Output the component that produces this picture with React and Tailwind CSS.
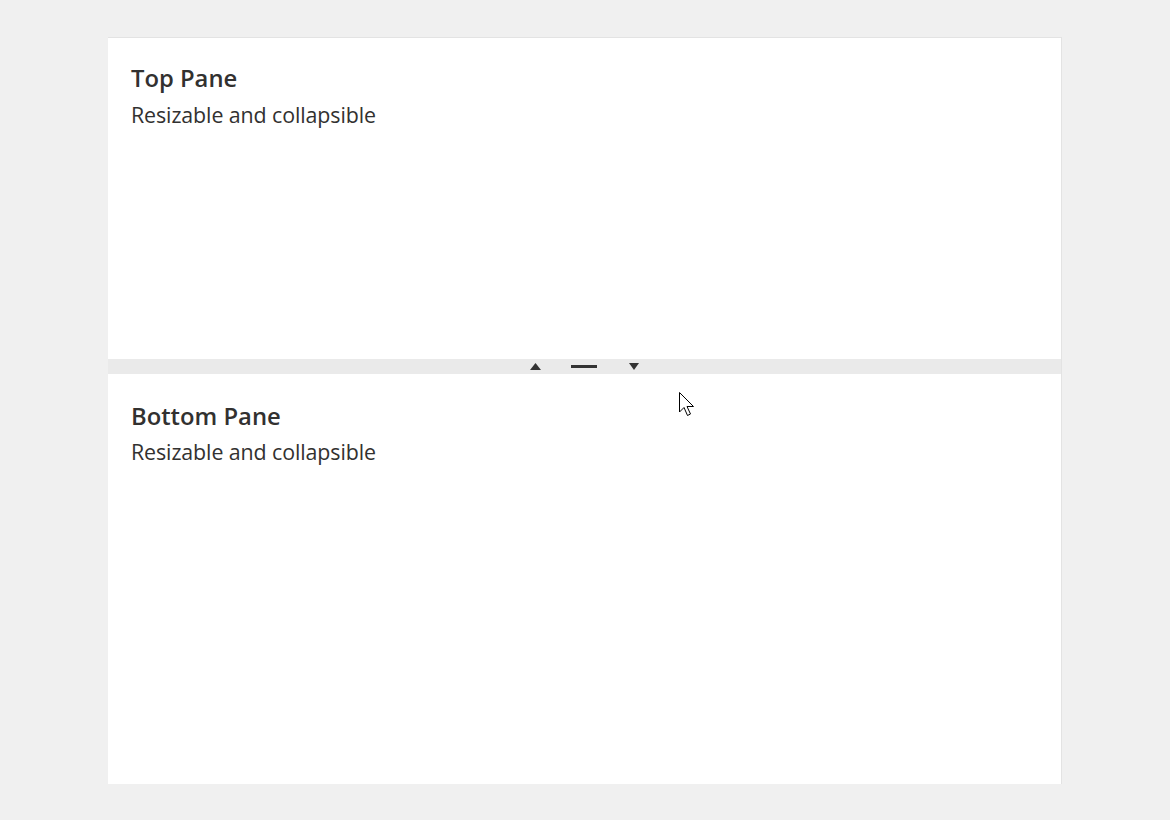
export default function App() {
  return (
    <div
      className="relative min-h-[820px] w-full bg-[#f0f0f0] pt-[37px] pl-[108px]"
      style={{ fontFamily: '"Open Sans", "Noto Sans", sans-serif' }}
    >
      <div className="flex h-[747px] w-[954px] flex-col border border-b-0 border-l-0 border-[#e3e3e3] bg-white text-[#323130]">
        {/* Top pane */}
        <div className="h-[321px] px-[23px] pt-[24px]">
          <h2 className="mb-[6px] text-[23.8px] font-semibold leading-[32px]">Top Pane</h2>
          <p className="text-[21.4px] leading-[30px] tracking-[-0.1px]">Resizable and collapsible</p>
        </div>

        {/* Splitter */}
        <div className="flex h-[15px] items-center justify-center bg-[#eaeaea]">
          <div className="flex items-center">
            <svg width="11" height="7" viewBox="0 0 11 7" className="mr-[30px]">
              <polygon points="5.5,0 11,7 0,7" fill="#333" />
            </svg>
            <div className="h-[3px] w-[26px] bg-[#333]" />
            <svg width="10" height="7" viewBox="0 0 10 7" className="ml-[32px]">
              <polygon points="0,0 10,0 5,7" fill="#333" />
            </svg>
          </div>
        </div>

        {/* Bottom pane */}
        <div className="flex-1 px-[23px] pt-[26px]">
          <h2 className="mb-[5px] text-[23.8px] font-semibold leading-[32px]">Bottom Pane</h2>
          <p className="text-[21.4px] leading-[30px] tracking-[-0.1px]">Resizable and collapsible</p>
        </div>
      </div>

      {/* mouse cursor */}
      <svg
        className="absolute left-[679px] top-[392px]"
        width="19"
        height="27"
        viewBox="0 0 19 27"
      >
        <path
          d="M0.5 0.5 L0.5 20 L5 15.5 L8.5 23.5 L11.5 22 L8 14.5 L14.5 14.5 Z"
          fill="white"
          stroke="black"
          strokeWidth="1"
          strokeLinejoin="miter"
        />
      </svg>
    </div>
  );
}
